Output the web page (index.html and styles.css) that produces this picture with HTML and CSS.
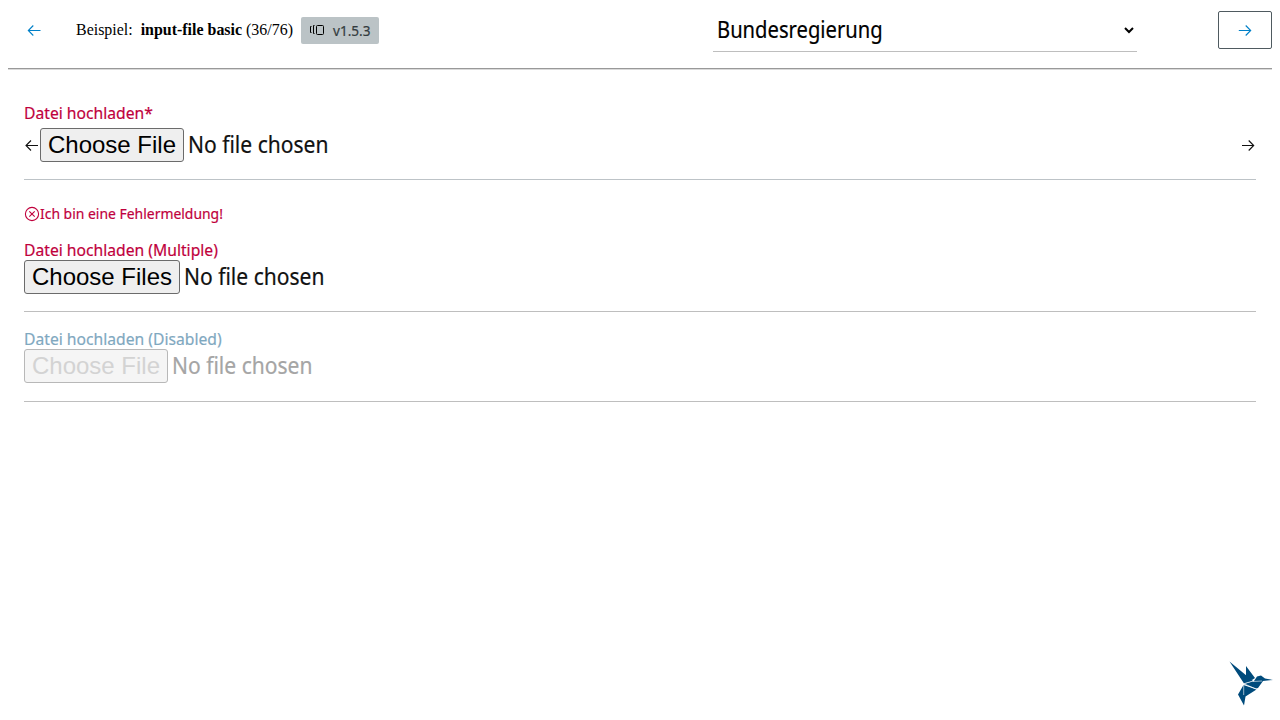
FILE: index.html
```html
<!DOCTYPE html>
<html lang="de">
<head>
<meta charset="utf-8">
<title>input-file basic</title>
<link rel="stylesheet" href="styles.css">
</head>
<body>
<header class="bar">
  <button class="nav prev" aria-label="Zurück"><svg width="14" height="12" viewBox="0 0 14 12"><path d="M13.500 6.500H1.500M6.300 1.500L1.300 6.500l5 5"/></svg></button>
  <div class="title"><span>Beispiel:</span><span class="name"><b>input-file basic</b> (36/76)</span></div>
  <span class="badge"><svg width="16" height="12" viewBox="0 0 16 12"><path d="M2.500 2.500H1.500V8.500H2.500M5.500 1.500H4.500V9.500H5.500M8.500 1.500H13.500Q14.500 1.500 14.500 2.500V9.500Q14.500 10.500 13.500 10.500H8.500Q7.500 10.500 7.500 9.500V2.500Q7.500 1.500 8.500 1.500Z"/></svg><span class="version">v1.5.3</span></span>
  <div class="select"><span class="value">Bundesregierung</span><svg width="10" height="8" viewBox="0 0 10 8"><path d="M1 2l4 4 4-4"/></svg></div>
  <button class="nav next" aria-label="Weiter"><svg width="14" height="12" viewBox="0 0 14 12"><path d="M.800 6.500h11.700M7.700 1.500l5 5-5 5"/></svg></button>
</header>
<hr class="rule">
<main class="form">
  <div class="field first">
    <div class="label">Datei hochladen*</div>
    <div class="control"><svg class="icon" width="16" height="16" viewBox="0 0 16 16"><path d="M14 8.500H2.200M7 3.500L2 8.500l5 5"/></svg><button class="file f1">Choose File</button><span class="status">No file chosen</span><svg class="icon end" width="16" height="16" viewBox="0 0 16 16"><path d="M2 8.500h11.500M8.700 3.500l5 5-5 5"/></svg></div>
  </div>
  <div class="error"><svg width="16" height="16" viewBox="0 0 16 16"><circle cx="8" cy="8" r="6.600"/><path d="M5.300 5.300l5.400 5.400M10.700 5.300l-5.400 5.400"/></svg><span class="message">Ich bin eine Fehlermeldung!</span></div>
  <div class="field second">
    <div class="label">Datei hochladen (Multiple)</div>
    <div class="control"><button class="file f2">Choose Files</button><span class="status">No file chosen</span></div>
  </div>
  <div class="field disabled">
    <div class="label">Datei hochladen (Disabled)</div>
    <div class="control"><button class="file f1" disabled>Choose File</button><span class="status">No file chosen</span></div>
  </div>
</main>
<svg class="bird" width="44" height="46" viewBox="0 0 44 46"><path d="M.500.500L24 20l-9 2.500zM17 5l9 12-3 2-6-4zM15 23l10-3 3-4.500 4-1 4 3 8 1.500-10 1-5 7-2 .5zM14.500 24l13 4.500-11 7-1.500 9-6-11z"/><path class="gap" d="M15 22.700l10-3M15.500 23l12 5.200M24 20.500l9-.5M14.700 24v10"/></svg>
</body>
</html>
```
FILE: styles.css
```css
* { box-sizing: border-box; }
body { margin: 0; padding: 0 8px; height: 720px; overflow: hidden; background: #fff; color: #000; font-family: "Noto Sans", sans-serif; }
svg { display: block; flex: none; fill: none; stroke: currentColor; stroke-width: 1.1; }
button { margin: 0; }
.bar { display: flex; align-items: center; height: 60px; }
.nav { display: flex; align-items: center; justify-content: center; width: 54px; height: 38px; padding: 0; border: 1px solid #4f5a60; border-radius: 2px; background: #fff; color: #0080c8; }
.prev { border-color: transparent; width: 52px; }
.title { display: flex; gap: 8px; margin-left: 16px; width: 225px; font: 15.950px/20px "Liberation Serif", serif; white-space: nowrap; }
.badge { display: flex; align-items: center; gap: 8px; width: 78px; height: 27px; padding-left: 8px; border-radius: 2px; background: #bbc3c6; font-size: 14px; }
.badge svg { stroke: #000; stroke-width: 1; }
.version, .value, .label, .status, .message { transform-origin: left; white-space: nowrap; -webkit-text-stroke: .2px currentColor; }
.version { color: #333b3e; transform: scaleX(.97); }
.value { padding-bottom: 2px; transform: scaleX(.878); }
.select { display: flex; align-items: center; justify-content: space-between; width: 424px; height: 43px; margin-left: 334px; padding: 0 3px 0 4px; border-bottom: 1px solid #bebebe; font-size: 23px; }
.select svg { stroke-width: 2; }
.next { margin-left: auto; }
.rule { height: 2px; margin: 8px 0 0; border: 0; border-top: 1px solid #999; border-bottom: 1px solid #dadada; }
.form { padding: 31px 16px 0; }
.field { border-bottom: 1px solid #bebebe; }
.first { height: 79px; border-color: #bdc3c7; }
.label { height: 23px; line-height: 23px; font-size: 17px; color: #c0003c; transform: scaleX(.922); }
.control { display: flex; align-items: center; height: 34px; font-size: 23px; line-height: 32px; color: #111; }
.first .control { margin-top: 4px; }
.icon.end { margin-left: auto; }
.file { height: 34px; padding: 0; border: 1px solid #6b6b6b; border-radius: 3px; background: #efefef; color: #000; font: 24px/30px "Liberation Sans", sans-serif; }
.f1 { width: 144px; }
.f2 { width: 156px; }
.status { margin-left: 4px; padding-bottom: 2px; transform: scaleX(.915); }
.error { display: flex; align-items: center; height: 20px; margin-top: 24px; font-size: 15px; color: #c0003c; }
.message { padding-bottom: 2px; transform: scaleX(.928); }
.second { height: 74px; margin-top: 14px; }
.second .control { margin-top: -1px; }
.disabled { height: 75px; margin-top: 15px; }
.disabled .control { margin-top: -1px; }
.disabled .label { color: #7fa8bf; }
.disabled .status { color: #a5a5a5; }
.file:disabled { color: #d3d3d3; border-color: #b8b8b8; background: #f5f5f5; }
.bird { position: absolute; left: 1229px; top: 661px; fill: #004b7c; stroke: none; }
.bird .gap { fill: none; stroke: #fff; stroke-width: .6; }
```
